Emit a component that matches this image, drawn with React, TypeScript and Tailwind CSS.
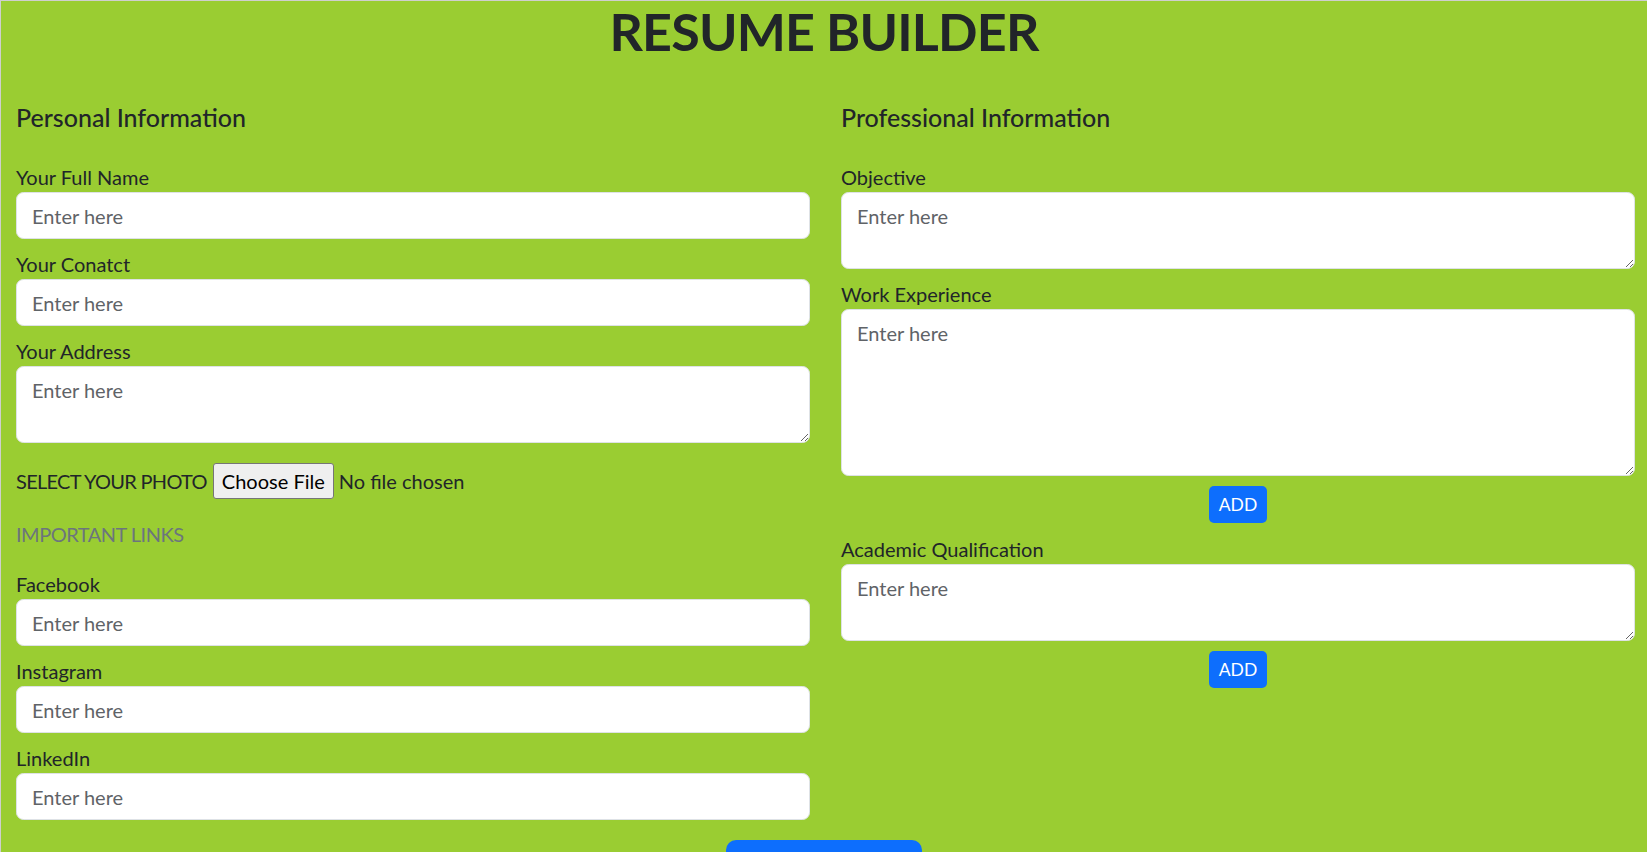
import React from "react";

const inputCls =
  "block w-full h-[47px] rounded-[7.5px] border border-[#dee2e6] bg-white px-[15px] text-[20px] leading-[30px] text-[#212529] placeholder:text-[#5f6367] outline-none";
const areaCls =
  "block w-full rounded-[7.5px] border border-[#dee2e6] bg-white px-[15px] py-[7.5px] text-[20px] leading-[30px] text-[#212529] placeholder:text-[#5f6367] outline-none resize-y";

function Field({ label }: { label: string }) {
  return (
    <div className="mb-[10px]">
      <label className="block text-[20px] leading-[30px]">{label}</label>
      <input className={inputCls} placeholder="Enter here" />
    </div>
  );
}

function Area({ label, h }: { label: string; h: string }) {
  return (
    <div className="mb-[10px]">
      <label className="block text-[20px] leading-[30px]">{label}</label>
      <textarea className={areaCls + " " + h} placeholder="Enter here" />
    </div>
  );
}

function AddBtn() {
  return (
    <div className="flex justify-center">
      <button className="h-[37px] rounded-[5px] bg-[#0d6efd] px-[10px] text-[17.5px] leading-[26px] text-white">
        ADD
      </button>
    </div>
  );
}

export default function App() {
  return (
    <div className="h-[852px] overflow-hidden border-l border-t border-[#cfcfcf] bg-[#9acd32] font-['Lato','Liberation_Sans',sans-serif] text-[#212529]">
      <h1 className="h-[60px] text-center text-[52px] font-bold leading-[60px] tracking-[-0.8px]">
        RESUME BUILDER
      </h1>
      <div className="grid grid-cols-2 gap-x-[31px] pl-[15px] pr-[12px] pt-[41px]">
        <div>
          <h5 className="mb-[30px] text-[25px] font-medium leading-[30px]">
            Personal Information
          </h5>
          <Field label="Your Full Name" />
          <Field label="Your Conatct" />
          <Area label="Your Address" h="h-[77px]" />
          <div className="mt-[20px] flex h-[36px] items-center text-[20px] leading-[30px]">
            <span className="tracking-[-0.7px]">SELECT YOUR PHOTO</span>
            <span className="ml-[6px] flex h-[36px] items-center rounded-[3px] border border-[#767676] bg-[#efefef] px-[8px] text-[20px] text-[#000]">
              Choose File
            </span>
            <span className="ml-[5px]">No file chosen</span>
          </div>
          <div className="mt-[20px] mb-[20px] text-[20px] leading-[30px] tracking-[-0.5px] text-[#6c757d]">
            IMPORTANT LINKS
          </div>
          <Field label="Facebook" />
          <Field label="Instagram" />
          <Field label="LinkedIn" />
        </div>
        <div>
          <h5 className="mb-[30px] text-[25px] font-medium leading-[30px]">
            Professional Information
          </h5>
          <Area label="Objective" h="h-[77px]" />
          <Area label="Work Experience" h="h-[167px]" />
          <AddBtn />
          <div className="mt-[11px]">
            <Area label="Academic Qualification" h="h-[77px]" />
          </div>
          <AddBtn />
        </div>
      </div>
      <div className="flex justify-center pt-[10px]">
        <button className="h-[60px] w-[196px] rounded-[10px] bg-[#0d6efd] text-[22px] text-white">
          Generate Resume
        </button>
      </div>
    </div>
  );
}
